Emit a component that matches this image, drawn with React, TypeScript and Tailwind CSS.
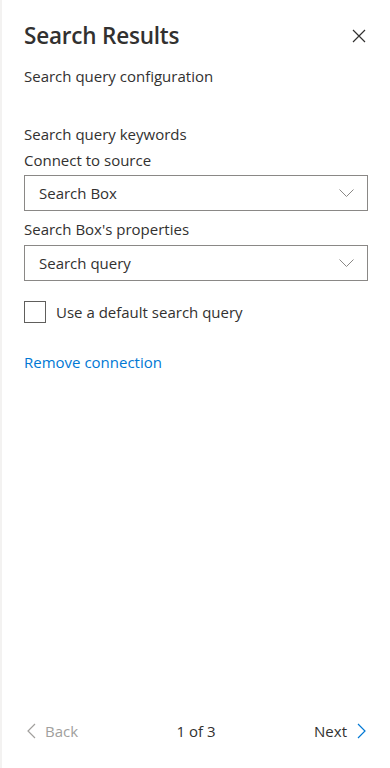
const Chevron = ({ dir, className }: { dir: "down" | "left" | "right"; className?: string }) => {
  if (dir === "down")
    return (
      <svg width="15" height="8" viewBox="0 0 15 8" fill="none" className={className}>
        <path d="M0.5 0.5l7 7 7-7" stroke="currentColor" strokeWidth="1" />
      </svg>
    );
  return (
    <svg width="9" height="16" viewBox="0 0 9 16" fill="none" className={className}>
      <path d={dir === "left" ? "M8 1L1 8l7 7" : "M1 1l7 7-7 7"} stroke="currentColor" strokeWidth="1.2" />
    </svg>
  );
};

const Dropdown = ({ value }: { value: string }) => (
  <div className="flex h-[36px] items-center justify-between border border-[#8a8886] bg-white pl-[14px] pr-[13px]">
    <span className="text-[15px] text-[#323130]">{value}</span>
    <Chevron dir="down" className="text-[#8a8886]" />
  </div>
);

export default function App() {
  return (
    <div
      className="flex h-[768px] w-[390px] bg-[#f3f2f1]"
      style={{ fontFamily: '"Open Sans", "Noto Sans", sans-serif' }}
    >
      <div className="ml-[2px] flex flex-1 flex-col bg-white px-[22px] text-[#323130]">
        {/* Header */}
        <div className="mt-[20px] flex h-[32px] items-center justify-between">
          <h1 className="text-[22.5px] font-semibold tracking-[-0.2px] text-[#323130]">Search Results</h1>
          <svg width="14" height="14" viewBox="0 0 14 14" fill="none" className="mr-[2px] text-[#323130]">
            <path d="M1 1l12 12M13 1L1 13" stroke="currentColor" strokeWidth="1.2" />
          </svg>
        </div>
        <p className="mt-[12px] text-[15px] leading-[24px]">Search query configuration</p>

        <p className="mt-[34px] text-[15px] leading-[24px]">Search query keywords</p>
        <p className="mt-[2px] text-[15px] leading-[24px]">Connect to source</p>
        <div className="mt-[3px]">
          <Dropdown value="Search Box" />
        </div>
        <p className="mt-[6px] text-[15px] leading-[24px]">Search Box's properties</p>
        <div className="mt-[4px]">
          <Dropdown value="Search query" />
        </div>

        {/* Checkbox */}
        <label className="mt-[20px] flex items-center gap-[10px]">
          <span className="h-[22px] w-[22px] border border-[#605e5c] bg-white" />
          <span className="text-[15px]">Use a default search query</span>
        </label>

        <a className="mt-[26px] text-[15px] leading-[24px] text-[#0078d4]">Remove connection</a>

        {/* Footer */}
        <div className="mt-auto mb-[26px] flex items-center justify-between">
          <button className="ml-[3px] flex items-center gap-[9px] text-[15px] text-[#a19f9d]">
            <Chevron dir="left" />
            Back
          </button>
          <span className="text-[15px] text-[#323130]">1 of 3</span>
          <button className="mr-[2px] flex items-center gap-[10px] text-[15px] text-[#323130]">
            Next
            <Chevron dir="right" className="text-[#0078d4]" />
          </button>
        </div>
      </div>
    </div>
  );
}
